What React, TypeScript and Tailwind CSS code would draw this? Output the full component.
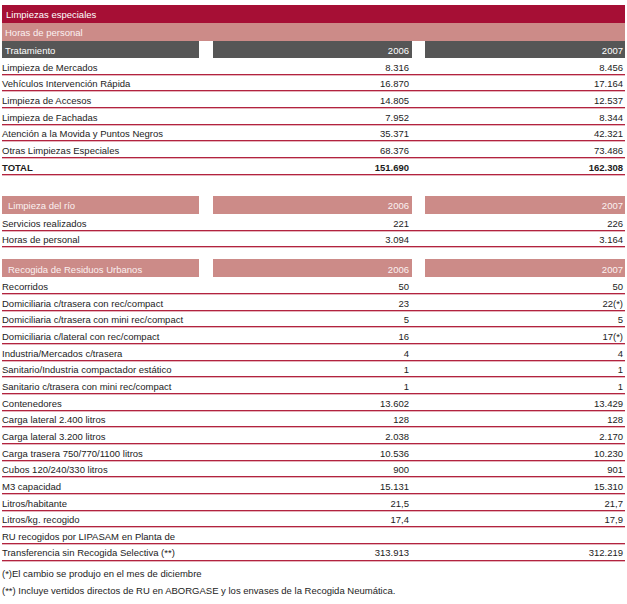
import React from "react";

const font = { fontFamily: '"Liberation Sans", Arial, sans-serif' };

type R = [string, string, string, boolean?];

function HeaderCells({
  label,
  a,
  b,
  bg,
  text,
  lpad,
}: {
  label: string;
  a: string;
  b: string;
  bg: string;
  text: string;
  lpad: string;
}) {
  return (
    <div className={`flex h-[18px] items-center ${text}`}>
      <div className={`w-[197px] h-full flex items-center pt-[2px] ${bg} ${lpad}`}>{label}</div>
      <div className="w-[14px]" />
      <div className={`w-[199px] h-full flex items-center justify-end pt-[2px] pr-[3px] ${bg}`}>{a}</div>
      <div className="w-[13px]" />
      <div className={`w-[200px] h-full flex items-center justify-end pt-[2px] pr-[2px] ${bg}`}>{b}</div>
    </div>
  );
}

function Row({ r }: { r: R }) {
  const [label, a, b, bold] = r;
  return (
    <div
      className={`flex h-[16.67px] items-center pt-[3px] border-b border-[#b2233f] shadow-[0_1px_0_#e6b4bc] text-[#1c1c1c] ${
        bold ? "font-bold" : ""
      }`}
    >
      <div className="w-[197px] whitespace-nowrap">{label}</div>
      <div className="w-[14px]" />
      <div className="w-[199px] text-right pr-[3px]">{a}</div>
      <div className="w-[13px]" />
      <div className="w-[200px] text-right pr-[2px]">{b}</div>
    </div>
  );
}

const s1: R[] = [
  ["Limpieza de Mercados", "8.316", "8.456"],
  ["Vehículos Intervención Rápida", "16.870", "17.164"],
  ["Limpieza de Accesos", "14.805", "12.537"],
  ["Limpieza de Fachadas", "7.952", "8.344"],
  ["Atención a la Movida y Puntos Negros", "35.371", "42.321"],
  ["Otras Limpiezas Especiales", "68.376", "73.486"],
  ["TOTAL", "151.690", "162.308", true],
];

const s2: R[] = [
  ["Servicios realizados", "221", "226"],
  ["Horas de personal", "3.094", "3.164"],
];

const s3: R[] = [
  ["Recorridos", "50", "50"],
  ["Domiciliaria c/trasera con rec/compact", "23", "22(*)"],
  ["Domiciliaria c/trasera con mini rec/compact", "5", "5"],
  ["Domiciliaria c/lateral con rec/compact", "16", "17(*)"],
  ["Industria/Mercados c/trasera", "4", "4"],
  ["Sanitario/Industria compactador estático", "1", "1"],
  ["Sanitario c/trasera con mini rec/compact", "1", "1"],
  ["Contenedores", "13.602", "13.429"],
  ["Carga lateral 2.400 litros", "128", "128"],
  ["Carga lateral 3.200 litros", "2.038", "2.170"],
  ["Carga trasera 750/770/1100 litros", "10.536", "10.230"],
  ["Cubos 120/240/330 litros", "900", "901"],
  ["M3 capacidad", "15.131", "15.310"],
  ["Litros/habitante", "21,5", "21,7"],
  ["Litros/kg. recogido", "17,4", "17,9"],
  ["RU recogidos por LIPASAM en Planta de", "", ""],
  ["Transferencia sin Recogida Selectiva (**)", "313.913", "312.219"],
];

export default function App() {
  return (
    <div className="w-[627px] h-[604px] bg-white overflow-hidden" style={font}>
      <div className="pt-[5px] pl-[2px] w-[625px] text-[9.5px] leading-none">
        <div className="h-[18px] bg-[#a60f35] text-white flex items-center pt-[2px] pl-[4px]">
          Limpiezas especiales
        </div>
        <div className="h-[18px] bg-[#cc8b88] text-[#fbf1f1] flex items-center pt-[2px] pl-[3px]">
          Horas de personal
        </div>
        <div className="h-[17px] flex">
          <div className="w-[197px] bg-[#565656] text-white flex items-center pt-[2px] pl-[3px]">
            Tratamiento
          </div>
          <div className="w-[14px]" />
          <div className="w-[199px] bg-[#565656] text-white flex items-center justify-end pt-[2px] pr-[3px]">
            2006
          </div>
          <div className="w-[13px]" />
          <div className="w-[200px] bg-[#565656] text-white flex items-center justify-end pt-[2px] pr-[2px]">
            2007
          </div>
        </div>
        {s1.map((r, i) => (
          <Row key={i} r={r} />
        ))}

        <div className="mt-[21.5px]">
          <HeaderCells
            label="Limpieza del río"
            a="2006"
            b="2007"
            bg="bg-[#cc8b88]"
            text="text-[#fbf1f1]"
            lpad="pl-[6px]"
          />
          {s2.map((r, i) => (
            <Row key={i} r={r} />
          ))}
        </div>

        <div className="mt-[12px]">
          <HeaderCells
            label="Recogida de Residuos Urbanos"
            a="2006"
            b="2007"
            bg="bg-[#cc8b88]"
            text="text-[#fbf1f1]"
            lpad="pl-[6px]"
          />
          {s3.map((r, i) => (
            <Row key={i} r={r} />
          ))}
        </div>

        <div className="mt-[4px] text-[#1c1c1c]">
          <div className="h-[17px] flex items-center pt-[2px]">(*)El cambio se produjo en el mes de diciembre</div>
          <div className="h-[17px] flex items-center pt-[2px]">
            (**) Incluye vertidos directos de RU en ABORGASE y los envases de la Recogida Neumática.
          </div>
        </div>
      </div>
    </div>
  );
}
